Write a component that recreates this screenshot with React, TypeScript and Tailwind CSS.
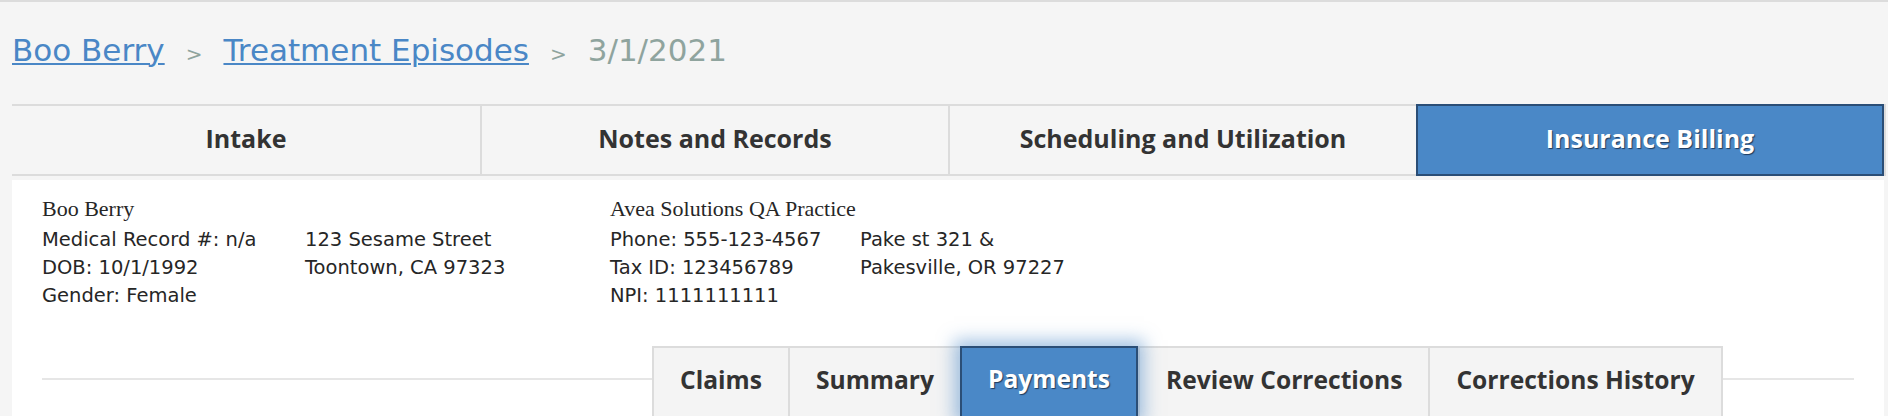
import React from 'react';

const mainTabs = ['Intake', 'Notes and Records', 'Scheduling and Utilization', 'Insurance Billing'];
const subTabs = ['Claims', 'Summary', 'Payments', 'Review Corrections', 'Corrections History'];

export default function App() {
  return (
    <div className="min-h-[416px] bg-[#f5f5f5] border-t-2 border-[#dcdcdc] overflow-hidden">
      {/* Breadcrumb */}
      <div className="h-[102px] pl-[12px] pt-[30px] flex items-baseline font-['DejaVu_Sans',sans-serif] text-[31px] leading-[36px]">
        <a className="text-[#4a87c6] underline underline-offset-[2px] decoration-[2px]">Boo Berry</a>
        <span className="mx-[21px] text-[20px] text-[#8fa49e]">&gt;</span>
        <a className="text-[#4a87c6] underline underline-offset-[2px] decoration-[2px]">Treatment Episodes</a>
        <span className="mx-[21px] text-[20px] text-[#8fa49e]">&gt;</span>
        <span className="text-[#8fa49e]">3/1/2021</span>
      </div>

      {/* Main tabs */}
      <div className="ml-[12px] mr-[2px] grid grid-cols-4 h-[72px] border-y-2 border-r-2 border-[#dcdcdc] font-['Open_Sans',sans-serif] text-[25px] font-bold">
        {mainTabs.map((t, i) =>
          i === 3 ? (
            <div
              key={t}
              className="-my-[2px] pb-[3px] flex items-center justify-center bg-[#4a88c7] border-2 border-[#2b4e76] text-white [text-shadow:1px_1px_1px_#1f3a5c]"
            >
              {t}
            </div>
          ) : (
            <div key={t} className={`pb-[3px] flex items-center justify-center text-[#333] ${i > 0 ? 'border-l-2 border-[#dcdcdc]' : ''}`}>
              {t}
            </div>
          )
        )}
      </div>

      {/* Panel */}
      <div className="mt-[4px] ml-[12px] mr-[4px] bg-white px-[30px] pt-[12px] h-[240px]">
        <div className="flex text-[#262626]">
          <div className="w-[568px]">
            <div className="font-['Liberation_Serif',serif] text-[22px] leading-[34px]">Boo Berry</div>
            <div className="grid grid-cols-[263px_1fr] font-['DejaVu_Sans',sans-serif] text-[19.5px] leading-[28px]">
              <div>Medical Record #: n/a</div>
              <div>123 Sesame Street</div>
              <div>DOB: 10/1/1992</div>
              <div>Toontown, CA 97323</div>
              <div>Gender: Female</div>
              <div />
            </div>
          </div>
          <div>
            <div className="font-['Liberation_Serif',serif] text-[22px] leading-[34px]">Avea Solutions QA Practice</div>
            <div className="grid grid-cols-[250px_1fr] font-['DejaVu_Sans',sans-serif] text-[19.5px] leading-[28px]">
              <div>Phone: 555-123-4567</div>
              <div>Pake st 321 &amp;</div>
              <div>Tax ID: 123456789</div>
              <div>Pakesville, OR 97227</div>
              <div>NPI: 1111111111</div>
              <div />
            </div>
          </div>
        </div>

        {/* Sub tabs */}
        <div className="mt-[36px] flex items-start">
          <div className="w-[610px] h-[2px] mt-[32px] bg-[#e6e6e6]" />
          <div className="flex font-['Open_Sans',sans-serif] text-[24.6px] font-bold">
            {subTabs.map((t, i) =>
              t === 'Payments' ? (
                <div
                  key={t}
                  className="relative z-10 h-[72px] px-[26px] pb-[5px] flex items-center bg-[#4a88c7] border-2 border-[#2b4e76] text-white [text-shadow:1px_1px_1px_#1f3a5c] shadow-[0_0_16px_6px_rgba(74,136,199,0.5)]"
                >
                  {t}
                </div>
              ) : (
                <div
                  key={t}
                  className={`h-[72px] px-[26px] pb-[5px] flex items-center bg-[#f4f4f4] text-[#333] border-t-2 border-l-2 border-[#dcdcdc] ${
                    i === subTabs.length - 1 ? 'border-r-2' : ''
                  }`}
                >
                  {t}
                </div>
              )
            )}
          </div>
          <div className="flex-1 h-[2px] mt-[32px] bg-[#e6e6e6]" />
        </div>
      </div>
    </div>
  );
}
